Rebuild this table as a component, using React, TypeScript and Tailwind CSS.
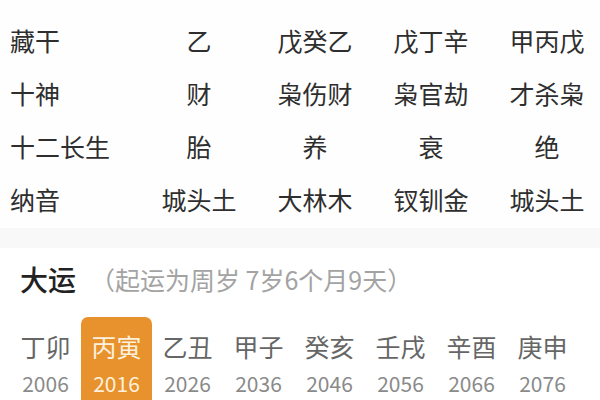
import React from "react";

const rows: [string, string[]][] = [
  ["藏干", ["乙", "戊癸乙", "戊丁辛", "甲丙戊"]],
  ["十神", ["财", "枭伤财", "枭官劫", "才杀枭"]],
  ["十二长生", ["胎", "养", "衰", "绝"]],
  ["纳音", ["城头土", "大林木", "钗钏金", "城头土"]],
];

const dayun: [string, string][] = [
  ["丁卯", "2006"],
  ["丙寅", "2016"],
  ["乙丑", "2026"],
  ["甲子", "2036"],
  ["癸亥", "2046"],
  ["壬戌", "2056"],
  ["辛酉", "2066"],
  ["庚申", "2076"],
];

export default function App() {
  return (
    <div
      className="w-[600px] h-[400px] overflow-hidden bg-white"
      style={{ fontFamily: '"Noto Sans CJK SC", "Noto Sans", sans-serif' }}
    >
      <div className="pt-[13px] pb-[3px] bg-[#fefefe]">
        {rows.map(([label, vals]) => (
          <div key={label} className="flex h-[53px] items-center text-[25px] leading-[30px] text-[#2e2e2e]">
            <div className="w-[141px] shrink-0 pl-[10px]">{label}</div>
            {vals.map((v, i) => (
              <div key={i} className="w-[116px] shrink-0 text-center">
                {v}
              </div>
            ))}
          </div>
        ))}
      </div>
      <div className="h-[20px] bg-[#f8f8f8]" />
      <div className="flex h-[62px] items-center pl-[20px]">
        <span className="text-[28px] leading-[34px] font-medium text-[#222222]">大运</span>
        <span className="ml-[14px] text-[25px] leading-[30px] text-[#a3a3a3]">（起运为周岁 7岁6个月9天）</span>
      </div>
      <div className="mt-[7px] flex pl-[10px]">
        {dayun.map(([gz, yr], i) => (
          <div
            key={gz}
            className={
              i === 1
                ? "w-[71px] h-[83px] shrink-0 flex flex-col items-center rounded-t-[7px] bg-[#e8922d] text-[#fdf1de]"
                : "w-[71px] h-[83px] shrink-0 flex flex-col items-center text-[#666666]"
            }
          >
            <div className="mt-[15px] text-[25px] leading-[28px]">{gz}</div>
            <div
              className={
                i === 1
                  ? "mt-[13px] text-[21px] leading-[21px] text-[#fdf1de]"
                  : "mt-[13px] text-[21px] leading-[21px] text-[#8a8a8a]"
              }
            >
              {yr}
            </div>
          </div>
        ))}
      </div>
    </div>
  );
}
